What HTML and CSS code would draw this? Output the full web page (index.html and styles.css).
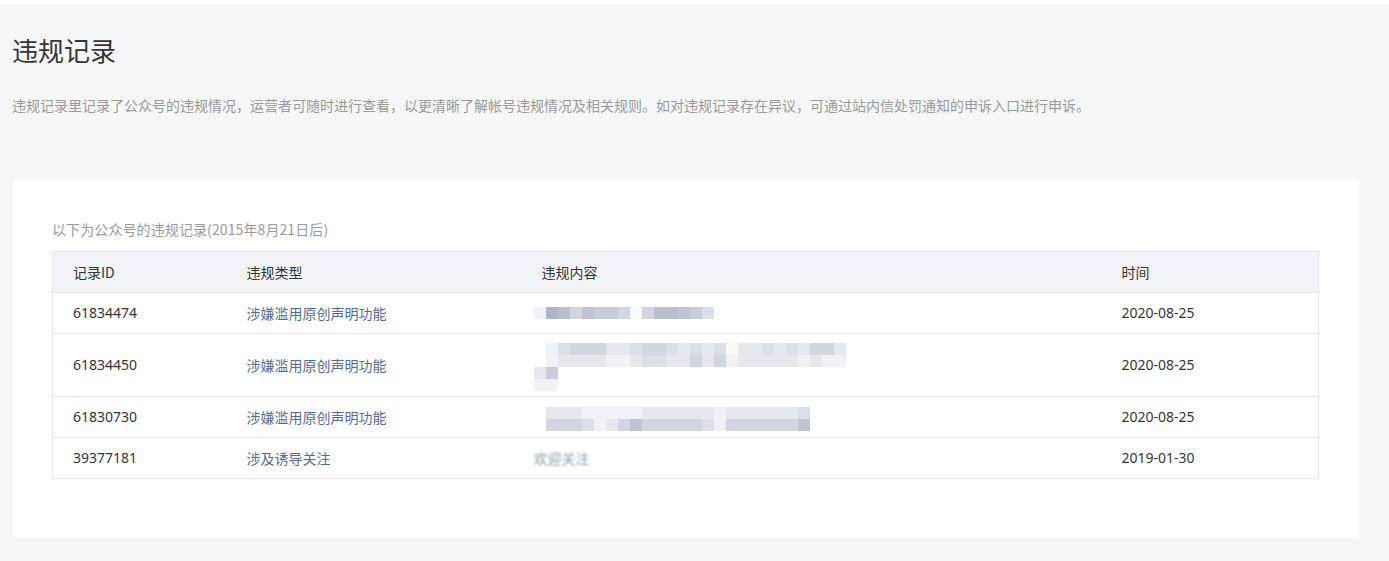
FILE: index.html
```html
<!DOCTYPE html>
<html lang="zh-CN">
<head>
<meta charset="utf-8">
<title>违规记录</title>
<link rel="stylesheet" href="styles.css">
</head>
<body>
<div class="page">
  <h1 class="title">违规记录</h1>
  <p class="desc">违规记录里记录了公众号的违规情况，运营者可随时进行查看，以更清晰了解帐号违规情况及相关规则。如对违规记录存在异议，可通过站内信处罚通知的申诉入口进行申诉。</p>
  <div class="card">
    <p class="sub">以下为公众号的违规记录(2015年8月21日后)</p>
    <table class="tbl">
      <colgroup>
        <col class="c1"><col class="c2"><col class="c3"><col class="c4">
      </colgroup>
      <thead>
        <tr><th>记录ID</th><th>违规类型</th><th>违规内容</th><th>时间</th></tr>
      </thead>
      <tbody>
        <tr>
          <td>61834474</td>
          <td class="type">涉嫌滥用原创声明功能</td>
          <td class="blur-cell">
            <div class="pxrow shift-l">
              <span class="e"></span><span class="a"></span><span class="a2"></span><span class="c"></span><span class="b2"></span><span class="b"></span><span class="b"></span><span class="c"></span><span class="w"></span><span class="c"></span><span class="a2"></span><span class="a2"></span><span class="b2"></span><span class="b"></span><span class="c2"></span>
            </div>
          </td>
          <td>2020-08-25</td>
        </tr>
        <tr class="tall">
          <td>61834450</td>
          <td class="type">涉嫌滥用原创声明功能</td>
          <td class="blur-cell">
            <div class="blur-block">
              <div class="pxrow">
                <span class="e"></span><span class="c2"></span><span class="c"></span><span class="c"></span><span class="c"></span><span class="d"></span><span class="d"></span><span class="c2"></span><span class="c"></span><span class="c"></span><span class="c2"></span><span class="d"></span><span class="c2"></span><span class="d"></span><span class="c2"></span><span class="w"></span><span class="d"></span><span class="d"></span><span class="c2"></span><span class="d"></span><span class="c2"></span><span class="d"></span><span class="c"></span><span class="c"></span><span class="d"></span>
              </div>
              <div class="pxrow">
                <span class="e"></span><span class="d"></span><span class="d"></span><span class="d"></span><span class="d"></span><span class="e"></span><span class="e"></span><span class="d"></span><span class="c2"></span><span class="c2"></span><span class="d"></span><span class="d"></span><span class="c"></span><span class="d"></span><span class="c"></span><span class="e"></span><span class="d"></span><span class="d"></span><span class="d"></span><span class="d"></span><span class="d"></span><span class="e"></span><span class="d"></span><span class="e"></span><span class="e"></span>
              </div>
              <div class="pxrow shift-l">
                <span class="d"></span><span class="b"></span>
              </div>
              <div class="pxrow shift-l">
                <span class="e"></span><span class="e"></span>
              </div>
            </div>
          </td>
          <td>2020-08-25</td>
        </tr>
        <tr>
          <td>61830730</td>
          <td class="type">涉嫌滥用原创声明功能</td>
          <td class="blur-cell">
            <div class="blur-block short">
              <div class="pxrow">
                <span class="d"></span><span class="d"></span><span class="d"></span><span class="e"></span><span class="e"></span><span class="e"></span><span class="e"></span><span class="e"></span><span class="d"></span><span class="d"></span><span class="d"></span><span class="d"></span><span class="d"></span><span class="d"></span><span class="e"></span><span class="d"></span><span class="d"></span><span class="d"></span><span class="d"></span><span class="d"></span><span class="d"></span><span class="c2"></span>
              </div>
              <div class="pxrow">
                <span class="c"></span><span class="c"></span><span class="c"></span><span class="c2"></span><span class="e"></span><span class="d"></span><span class="c"></span><span class="b2"></span><span class="c"></span><span class="c"></span><span class="c"></span><span class="c"></span><span class="c"></span><span class="c2"></span><span class="e"></span><span class="c"></span><span class="c"></span><span class="c"></span><span class="c"></span><span class="c"></span><span class="c"></span><span class="b2"></span>
              </div>
            </div>
          </td>
          <td>2020-08-25</td>
        </tr>
        <tr>
          <td>39377181</td>
          <td class="type">涉及诱导关注</td>
          <td class="blur-cell">
            <div class="blur-text">欢迎关注</div>
          </td>
          <td>2019-01-30</td>
        </tr>
      </tbody>
    </table>
  </div>
</div>
</body>
</html>
```

FILE: styles.css
```css
html, body {
  margin: 0;
  padding: 0;
  background: #ffffff;
}

body {
  font-family: "Noto Sans", "Noto Sans CJK SC", sans-serif;
  color: #353535;
}

.page {
  margin-top: 4px;
  background: #f6f7f9;
  padding: 28px 30px 22px 12px;
  height: 557px;
  box-sizing: border-box;
}

.title {
  margin: 0;
  font-size: 26px;
  line-height: 36px;
  font-weight: 400;
  color: #353535;
  font-family: "Noto Sans CJK SC", sans-serif;
}

.desc {
  margin: 27px 0 0;
  font-size: 14px;
  line-height: 20px;
  color: #9a9a9a;
  font-family: "Noto Sans CJK SC", sans-serif;
}

.card {
  margin-top: 64px;
  background: #ffffff;
  border-radius: 4px;
  padding: 40px 40px 60px;
  box-shadow: 0 1px 2px rgba(150, 150, 160, 0.08);
}

.sub {
  margin: 0 0 12px;
  font-size: 14px;
  line-height: 20px;
  color: #9a9a9a;
  font-family: "Noto Sans CJK SC", sans-serif;
  letter-spacing: 0.1px;
}

.tbl {
  width: 100%;
  border-collapse: collapse;
  table-layout: fixed;
  font-size: 14px;
  border: 1px solid #e4e6eb;
}

.c1 { width: 174px; }
.c2 { width: 295px; }
.c3 { width: 580px; }

.tbl th,
.tbl td {
  text-align: left;
  font-weight: 400;
  padding: 10px 20px;
  line-height: 20px;
  border-bottom: 1px solid #e4e6eb;
  vertical-align: middle;
  color: #353535;
  font-family: "Noto Sans", "Noto Sans CJK SC", sans-serif;
}

.tbl thead th {
  background: #f3f4f7;
  font-family: "Noto Sans CJK SC", sans-serif;
}

.tbl td.type {
  color: #576b95;
  font-family: "Noto Sans CJK SC", sans-serif;
}

.blur-cell {
  padding-top: 10px;
  padding-bottom: 10px;
}

.pxrow {
  display: flex;
  height: 12px;
  margin-left: 4px;
}

.pxrow.shift-l {
  margin-left: -8px;
}

.pxrow span {
  width: 12px;
  height: 12px;
  flex: none;
}

.blur-block {
  height: 43px;
  margin-top: -1px;
}

.blur-block.short {
  height: 20px;
  margin-top: -1px;
}

.pxrow .a { background: #b0b4c7; }
.pxrow .a2 { background: #b9bfcc; }
.pxrow .b { background: #c8ccd8; }
.pxrow .b2 { background: #c0c4d2; }
.pxrow .c { background: #d3d6e0; }
.pxrow .c2 { background: #dcdfe7; }
.pxrow .d { background: #e7e8ee; }
.pxrow .e { background: #f1f2f5; }
.pxrow .w { background: #fafafb; }

.blur-text {
  font-family: "Noto Sans CJK SC", sans-serif;
  color: #8f96ae;
  font-size: 14px;
  line-height: 20px;
  margin-left: -8px;
  filter: blur(0.8px);
}
```
